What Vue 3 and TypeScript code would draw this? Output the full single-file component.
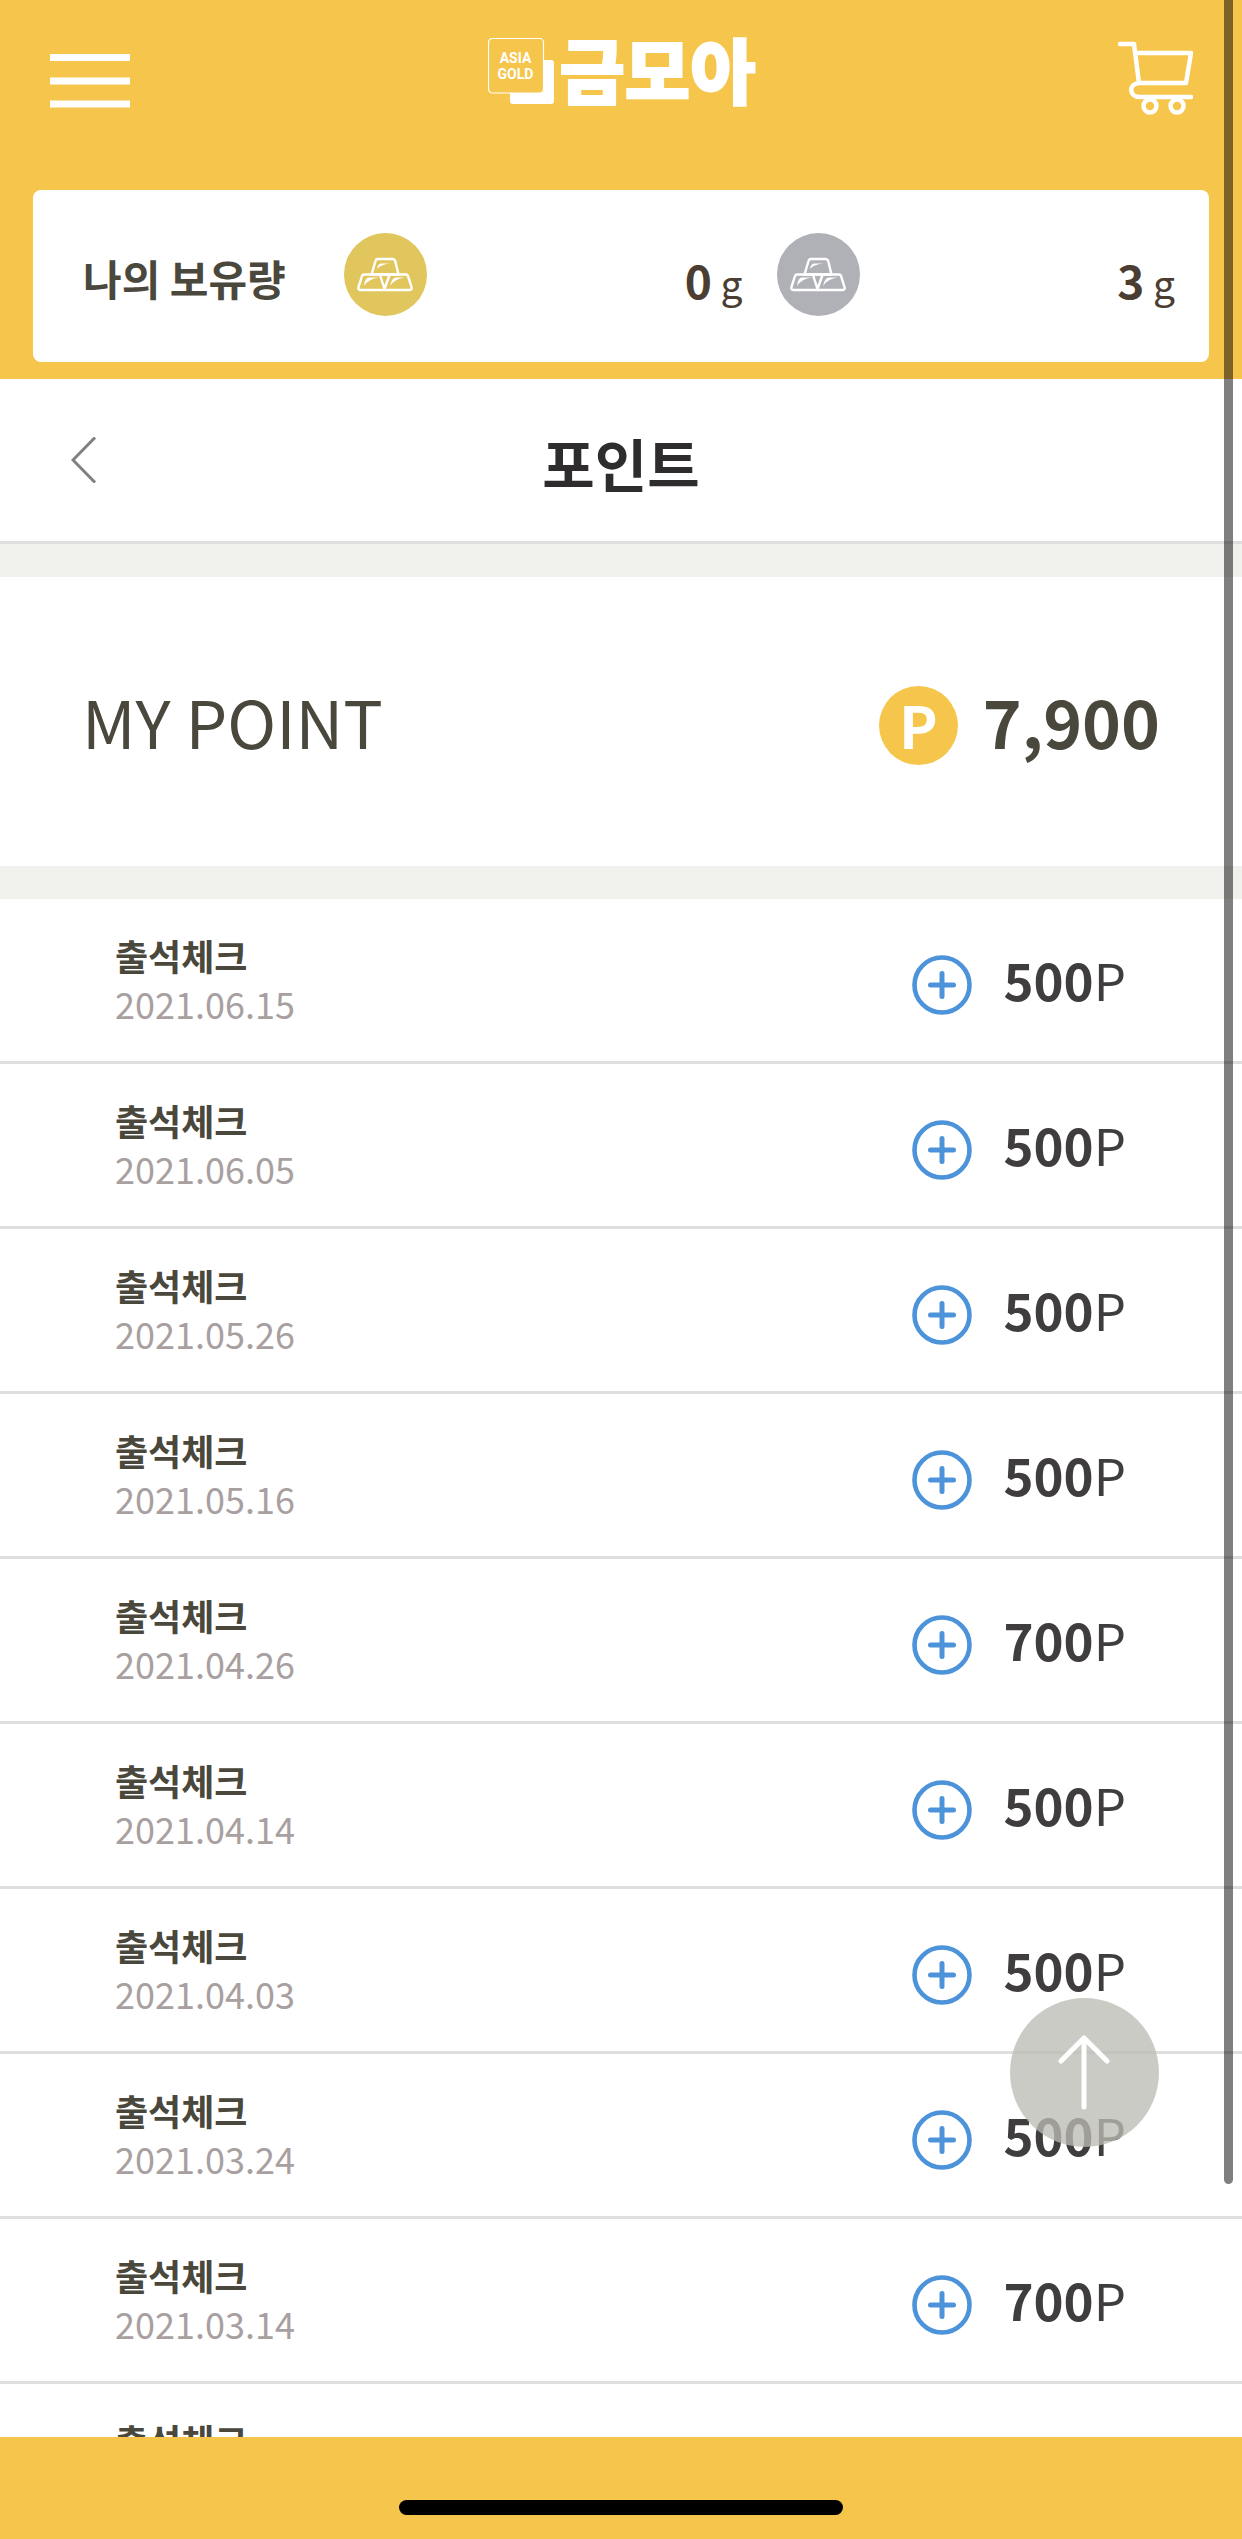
<script setup lang="ts">
interface Holding {
  id: string
  name: string
  amount: number
}

interface PointEntry {
  title: string
  date: string
  points: number
}

const holdings: Holding[] = [
  { id: 'gold', name: '금', amount: 0 },
  { id: 'silver', name: '은', amount: 3 },
]

const total = 7900

const entries: PointEntry[] = [
  { title: '출석체크', date: '2021.06.15', points: 500 },
  { title: '출석체크', date: '2021.06.05', points: 500 },
  { title: '출석체크', date: '2021.05.26', points: 500 },
  { title: '출석체크', date: '2021.05.16', points: 500 },
  { title: '출석체크', date: '2021.04.26', points: 700 },
  { title: '출석체크', date: '2021.04.14', points: 500 },
  { title: '출석체크', date: '2021.04.03', points: 500 },
  { title: '출석체크', date: '2021.03.24', points: 500 },
  { title: '출석체크', date: '2021.03.14', points: 700 },
  { title: '출석체크', date: '2021.03.04', points: 500 },
]
</script>

<template>
  <div class="screen">
    <header class="header">
      <div class="topbar">
        <button type="button" class="icon-button menu" aria-label="메뉴">
          <svg width="80" height="54" viewBox="0 0 80 54" aria-hidden="true">
            <path d="M0 3.5H80M0 27H80M0 50H80" stroke="#fff" stroke-width="7" />
          </svg>
        </button>
        <a href="#" class="logo">
          <span class="emblem">
            <svg class="emblem-shape" width="66" height="66" viewBox="0 0 66 66" aria-hidden="true">
              <path d="M55.500 22H63a3 3 0 0 1 3 3V63a3 3 0 0 1-3 3H25a3 3 0 0 1-3-3V55H53a2.500 2.500 0 0 0 2.500-2.500Z" fill="#fff" />
              <rect x="0.500" y="0.500" width="55" height="54.500" rx="4" fill="none" stroke="#fff" stroke-width="1.200" />
            </svg>
            <span class="emblem-text">ASIA<br>GOLD</span>
          </span>
          <span class="wordmark">금모아</span>
        </a>
        <button type="button" class="icon-button cart" aria-label="장바구니">
          <svg width="76" height="74" viewBox="0 0 76 74" fill="none" stroke="#fff" stroke-width="4.500" stroke-linecap="round" stroke-linejoin="round" aria-hidden="true">
            <path d="M3 3H17L22 42H69L74 12H19" />
            <path d="M22 42C11 43 12 56 23 56H74" />
            <circle cx="33" cy="65" r="6.500" />
            <circle cx="60" cy="65" r="6.500" />
          </svg>
        </button>
      </div>

      <section class="card">
        <h2 class="card-label">나의 보유량</h2>
        <div v-for="item in holdings" :key="item.id" class="holding">
          <svg :class="['bars', item.id]" width="83" height="83" viewBox="0 0 83 83" role="img" :aria-label="item.name">
            <circle cx="41.500" cy="41.500" r="41.500" />
            <g fill="none" stroke="#fff" stroke-width="2.400" stroke-linejoin="round">
              <path d="M34 26H48.500Q50.500 26 51.200 28L54.500 41.500H27.500L31.500 28Q32 26 34 26Z" />
              <path d="M20 41.500H40.500V57H17Q13.500 57 14.500 54L18 43Q18.500 41.500 20 41.500Z" stroke="none" />
              <path d="M40.500 57H17Q13.500 57 14.500 54L18 43Q18.500 41.500 20 41.500H62Q63.500 41.500 64 43L67.500 54Q68.500 57 65 57H40.500" />
              <path d="M36 42L40.500 56L45.500 42" />
            </g>
            <path d="M33 36Q34 30 38 30.500H47Q37 31 33 36ZM20 53Q21 43.500 26 44.500H35Q24 46 20 53ZM46 53Q48 43.500 53 44.500H61Q50 46 46 53Z" fill="#fff" />
          </svg>
          <p class="amount"><strong>{{ item.amount }}</strong> g</p>
        </div>
      </section>
    </header>

    <main class="content">
      <div class="title-bar">
        <button type="button" class="icon-button" aria-label="뒤로">
          <svg width="26" height="46" viewBox="0 0 26 46" fill="none" stroke="#808080" stroke-width="3" aria-hidden="true">
            <path d="M24 0.500L2 23L24 45.500" />
          </svg>
        </button>
        <h1 class="title">포인트</h1>
      </div>

      <section class="summary">
        <h2 class="summary-label">MY POINT</h2>
        <p class="summary-value">
          <span class="coin">P</span>
          <strong>{{ total.toLocaleString('en-US') }}</strong>
        </p>
      </section>

      <ul class="entries">
        <li v-for="entry in entries" :key="entry.date" class="entry">
          <div class="entry-text">
            <strong class="entry-title">{{ entry.title }}</strong>
            <time class="entry-date">{{ entry.date }}</time>
          </div>
          <svg class="plus" width="60" height="60" viewBox="0 0 60 60" fill="none" stroke="#4c93d9" stroke-linecap="round" aria-hidden="true">
            <circle cx="30" cy="30" r="27.500" stroke-width="4.600" />
            <path d="M18.500 30H41.500M30 18.500V41.500" stroke-width="5" />
          </svg>
          <p class="entry-points"><strong>{{ entry.points }}</strong>P</p>
        </li>
      </ul>
    </main>

    <footer class="home-area"><span class="home-bar"></span></footer>

    <button type="button" class="to-top" aria-label="맨 위로">
      <svg width="54" height="76" viewBox="0 0 54 76" fill="none" stroke="#fff" stroke-width="5" stroke-linecap="round" stroke-linejoin="round" aria-hidden="true">
        <path d="M26 72V3M3 26L26 3L49 26" />
      </svg>
    </button>
    <span class="scroll-thumb"></span>
  </div>
</template>

<style>
body {
  margin: 0;
  background: #fff;
}
</style>

<style scoped>
.screen {
  position: relative;
  display: flex;
  flex-direction: column;
  height: 100vh;
  overflow: hidden;
  background: #fff;
  color: #4a473d;
  font-family: "Noto Sans CJK KR", "Noto Sans", sans-serif;
}

h1,
h2,
p,
ul {
  margin: 0;
  padding: 0;
}

svg {
  display: block;
}

.icon-button {
  padding: 0;
  border: 0;
  background: none;
  cursor: pointer;
}

.header {
  flex: none;
  padding: 0 33px 17px;
  background: #f6c54c;
}

.topbar {
  display: grid;
  grid-template-columns: 1fr auto 1fr;
  align-items: center;
  height: 156px;
  margin-bottom: 34px;
  padding: 0 16px 0 17px;
}

.menu {
  justify-self: start;
  padding-top: 6px;
}

.cart {
  justify-self: end;
}

.logo {
  display: flex;
  align-items: center;
  gap: 6px;
  padding-bottom: 14px;
  color: #fff;
  text-decoration: none;
}

.emblem {
  position: relative;
  width: 66px;
  height: 66px;
}

.emblem-text {
  position: absolute;
  top: 0;
  left: 0;
  width: 56px;
  padding-top: 12px;
  font: 700 14px/16px Roboto, sans-serif;
  text-align: center;
}

.wordmark {
  padding-bottom: 8px;
  font-size: 71px;
  font-weight: 900;
  line-height: 66px;
  -webkit-text-stroke: 2px #fff;
}

.card {
  display: flex;
  align-items: center;
  gap: 34px;
  height: 172px;
  padding: 0 34px 0 50px;
  border-radius: 8px;
  background: #fff;
}

.card-label {
  flex: 0 0 227px;
  padding-top: 3px;
  font-size: 42px;
  font-weight: 700;
  line-height: 60px;
}

.holding {
  display: flex;
  flex: 1;
  align-items: center;
  justify-content: space-between;
}

.bars {
  margin-bottom: 3px;
}

.gold {
  fill: #e0c65c;
}

.silver {
  fill: #b0b1b7;
}

.amount {
  padding-top: 8px;
  color: #4b3d31;
  font-size: 39px;
  line-height: 60px;
}

.amount strong {
  font-size: 46px;
}

.content {
  flex: 1;
  min-height: 0;
  overflow: hidden;
}

.title-bar {
  display: grid;
  grid-template-columns: 1fr auto 1fr;
  align-items: center;
  justify-items: start;
  height: 162px;
  padding: 0 71px;
  border-bottom: 3px solid #dedede;
}

.title {
  padding-top: 4px;
  color: #2e2c2c;
  font-size: 57px;
  font-weight: 700;
  line-height: 80px;
}

.summary {
  display: flex;
  align-items: center;
  justify-content: space-between;
  height: 289px;
  padding: 0 82px;
  border: solid #f0f1ec;
  border-width: 33px 0;
  font-size: 66px;
  line-height: 96px;
}

.summary-label {
  padding-bottom: 4px;
  font-size: 66px;
  font-weight: 400;
}

.summary-value {
  display: flex;
  align-items: center;
  gap: 25px;
}

.summary-value strong {
  padding-bottom: 4px;
}

.coin {
  width: 79px;
  height: 79px;
  margin-top: 8px;
  border-radius: 50%;
  background: #f6c54c;
  color: #fff;
  font-size: 58px;
  font-weight: 700;
  line-height: 76px;
  text-align: center;
}

.entries {
  list-style: none;
}

.entry {
  display: flex;
  align-items: center;
  height: 160px;
  padding: 0 116px 2px 115px;
  border-bottom: 3px solid #dedede;
}

.entry-text {
  display: flex;
  flex: 1;
  flex-direction: column;
  font-size: 36px;
  line-height: 48px;
}

.entry-date {
  color: #a8a0a0;
}

.plus {
  margin-top: 12px;
  margin-right: 31px;
}

.entry-points {
  color: #403d3e;
  font-size: 51px;
  font-weight: 400;
  line-height: 72px;
}

.entry-points strong {
  font-weight: 700;
}

.home-area {
  display: flex;
  flex: none;
  align-items: flex-end;
  justify-content: center;
  height: 78px;
  padding-bottom: 24px;
  background: #f6c54c;
}

.home-bar {
  width: 444px;
  height: 15px;
  border-radius: 8px;
  background: #000;
}

.to-top {
  position: absolute;
  right: 83px;
  bottom: 392px;
  display: flex;
  align-items: center;
  justify-content: center;
  width: 149px;
  height: 149px;
  padding: 0;
  border: 0;
  border-radius: 50%;
  background: rgba(187, 187, 181, 0.77);
  cursor: pointer;
}

.scroll-thumb {
  position: absolute;
  top: 0;
  right: 9px;
  width: 9px;
  height: 86%;
  border-radius: 0 0 5px 5px;
  background: rgba(0, 0, 0, 0.5);
}
</style>
